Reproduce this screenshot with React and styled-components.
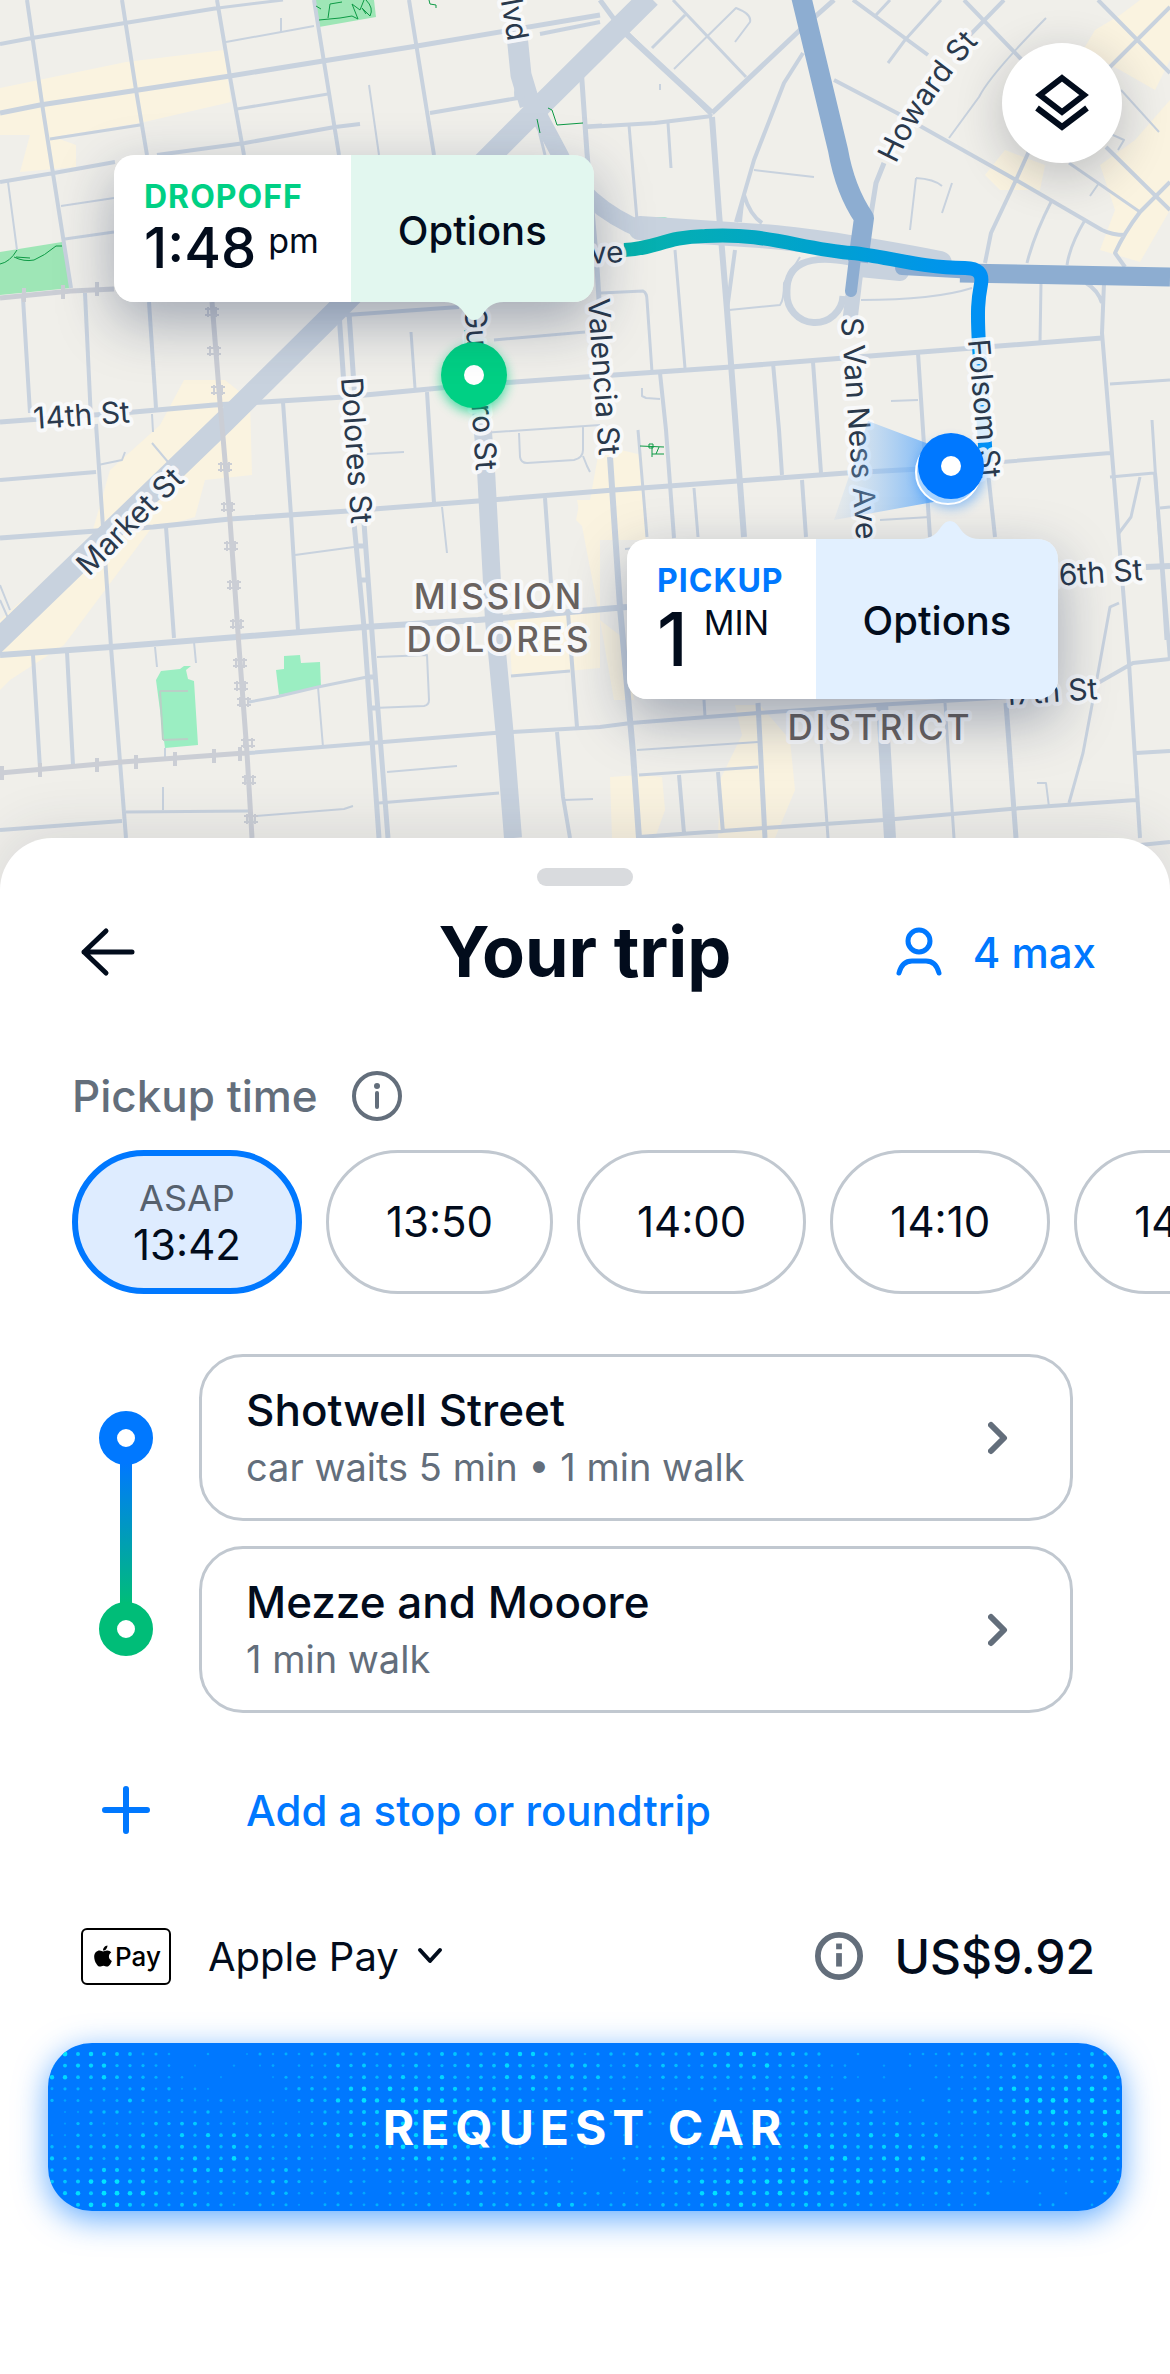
import { useState } from "react";
import styled, { createGlobalStyle, css } from "styled-components";
import { FaApple } from "react-icons/fa";

const INK = "#020c1c";
const BLUE = "#0078ff";
const GREEN = "#00d084";
const GREY = "#636e7b";
const LINE = "#c1c8d0";

const GlobalStyle = createGlobalStyle`
  *, *::before, *::after {
    box-sizing: border-box;
  }
  body {
    margin: 0;
    background: #fff;
    color: ${INK};
    font-family: Inter, "Liberation Sans", sans-serif;
  }
  button, select {
    font: inherit;
    color: inherit;
    border: none;
    background: none;
    padding: 0;
    cursor: pointer;
  }
`;

const Page = styled.main`
  overflow: hidden;
`;

/* ---------- map ---------- */

const MapArea = styled.section`
  position: relative;
`;

const MapCanvas = styled.svg`
  display: block;
  width: 100%;
  background: #f0efea;
`;

const Road = styled.path`
  fill: none;
  stroke: ${({ $color }) => $color || "#c8d2de"};
  stroke-width: ${({ $w }) => $w};
  stroke-linejoin: round;
  stroke-linecap: ${({ $cap }) => $cap || "butt"};
`;

const StreetLabel = styled.text`
  font-size: 30px;
  fill: #2a394c;
  stroke: rgba(250, 251, 253, 0.88);
  stroke-width: 8px;
  stroke-linejoin: round;
  paint-order: stroke;
`;

const AreaLabel = styled(StreetLabel)`
  font-size: 35px;
  font-weight: 500;
  letter-spacing: 3px;
  fill: #69625f;
`;

const LayersButton = styled.button`
  position: absolute;
  top: 43px;
  right: 48px;
  width: 120px;
  height: 120px;
  border-radius: 50%;
  background: #fff;
  box-shadow: 0 12px 48px rgba(20, 30, 50, 0.24);
  display: flex;
  align-items: center;
  justify-content: center;
`;

const Callout = styled.div`
  position: absolute;
  left: ${({ $left }) => $left}px;
  top: ${({ $top }) => $top}px;
  display: flex;
  border-radius: 20px;
  box-shadow: 0 20px 56px rgba(20, 40, 80, 0.36);
`;

const CalloutInfo = styled.div`
  background: #fff;
  border-radius: 20px 0 0 20px;
  padding: 25px 32px 19px 30px;
`;

const CalloutKind = styled.div`
  font-size: 32px;
  line-height: 34px;
  font-weight: 700;
  letter-spacing: 1px;
  color: ${({ $color }) => $color};
`;

const CalloutTime = styled.div`
  display: flex;
  align-items: flex-start;
  gap: ${({ $big }) => ($big ? 16 : 12)}px;
  font-size: ${({ $big }) => ($big ? 74 : 56)}px;
  line-height: ${({ $big }) => ($big ? 82 : 69)}px;
  font-weight: 500;
`;

const CalloutUnit = styled.span`
  font-size: 34px;
  line-height: ${({ $big }) => ($big ? 50 : 54)}px;
  font-weight: 400;
`;

const CalloutOptions = styled.button`
  background: ${({ $color }) => $color};
  border-radius: 0 20px 20px 0;
  padding: 3px 47px 0;
  font-size: 40px;
  font-weight: 500;
`;

const Tail = styled.svg`
  position: absolute;
  right: ${({ $right }) => $right}px;
  ${({ $up }) =>
    $up
      ? css`
          bottom: 100%;
          transform: rotate(180deg);
        `
      : css`
          top: 100%;
        `}
`;

/* ---------- sheet ---------- */

const Sheet = styled.section`
  position: relative;
  margin-top: -52px;
  background: #fff;
  border-radius: 52px 52px 0 0;
  box-shadow: 0 -8px 56px rgba(40, 50, 70, 0.12);
  padding: 30px 0 162px;
`;

const Handle = styled.div`
  width: 96px;
  height: 18px;
  margin: 0 auto;
  border-radius: 9px;
  background: #d9dbde;
`;

const Header = styled.header`
  display: grid;
  grid-template-columns: 1fr auto 1fr;
  align-items: center;
  height: 60px;
  margin-top: 36px;
  padding: 0 74px;
`;

const Title = styled.h1`
  margin: 0;
  font-size: 70px;
  line-height: 60px;
  font-weight: 700;
`;

const BackButton = styled.button`
  display: flex;
  justify-self: start;
`;

const Seats = styled.button`
  display: flex;
  align-items: center;
  justify-self: end;
  gap: 30px;
  color: ${BLUE};
  font-size: 42px;
  font-weight: 500;
`;

const PickupLabel = styled.div`
  display: flex;
  align-items: center;
  gap: 34px;
  height: 50px;
  margin-top: 89px;
  padding: 0 72px;
  color: ${GREY};
  font-size: 44px;
  font-weight: 500;
`;

const InfoButton = styled.button`
  display: flex;
  color: ${GREY};
`;

const Times = styled.div`
  display: flex;
  gap: 24px;
  margin-top: 29px;
  padding-left: 72px;
  overflow-x: auto;
  scrollbar-width: none;
`;

const TimeChip = styled.button`
  flex: 0 0 auto;
  display: flex;
  flex-direction: column;
  align-items: center;
  justify-content: center;
  height: 144px;
  padding: 0 57px;
  border-radius: 72px;
  border: 3px solid ${LINE};
  font-size: 42px;
  line-height: 48px;
  ${({ $active }) =>
    $active &&
    css`
      border: 6px solid ${BLUE};
      background: #deecff;
      padding: 0 55px;
    `}
`;

const ChipHint = styled.span`
  font-size: 36px;
  line-height: 46px;
  color: #56616e;
`;

const Trip = styled.div`
  display: grid;
  grid-template-columns: 54px 1fr;
  gap: 46px;
  margin-top: 60px;
  padding: 0 97px 0 99px;
`;

const Rail = styled.div`
  display: flex;
  flex-direction: column;
  align-items: center;
  padding: 57px 0;
`;

const RailDot = styled.span`
  width: 54px;
  height: 54px;
  border-radius: 50%;
  border: 18px solid ${({ $color }) => $color};
`;

const RailLine = styled.span`
  flex: 1;
  width: 12px;
  margin: -2px 0;
  background: linear-gradient(${BLUE}, #00bd78);
`;

const Stops = styled.div`
  display: flex;
  flex-direction: column;
  gap: 25px;
`;

const Stop = styled.button`
  display: flex;
  align-items: center;
  justify-content: space-between;
  height: 167px;
  padding: 0 62px 0 44px;
  border: 3px solid ${LINE};
  border-radius: 44px;
  text-align: left;
  color: ${GREY};
`;

const StopName = styled.div`
  font-size: 44px;
  line-height: 58px;
  font-weight: 500;
  color: ${INK};
`;

const StopNote = styled.div`
  font-size: 38px;
  line-height: 56px;
`;

const AddStop = styled.button`
  display: grid;
  grid-template-columns: 54px 1fr;
  align-items: center;
  justify-items: center;
  gap: 93px;
  height: 60px;
  margin: 67px 0 0 99px;
  color: ${BLUE};
  font-size: 42px;
  font-weight: 500;
`;

const Payment = styled.div`
  display: flex;
  align-items: center;
  height: 60px;
  margin-top: 86px;
  padding: 0 75px 0 81px;
`;

const PayBadge = styled.span`
  display: flex;
  align-items: center;
  justify-content: center;
  width: 90px;
  height: 57px;
  border: 2px solid #000;
  border-radius: 6px;
  color: #000;
  font-size: 26px;
  font-weight: 500;
`;

const PaySelect = styled.select`
  appearance: none;
  margin-left: 37px;
  margin-right: 18px;
  font-size: 40px;
`;

const Price = styled.div`
  display: flex;
  align-items: center;
  gap: 32px;
  margin-left: auto;
  font-size: 48px;
  font-weight: 500;
`;

const RequestButton = styled.button`
  position: relative;
  display: block;
  width: calc(100% - 96px);
  height: 168px;
  margin: 57px 48px 0;
  border-radius: 44px;
  background: ${BLUE};
  box-shadow: 0 8px 32px rgba(0, 120, 255, 0.62);
  color: #fff;
  font-size: 48px;
  font-weight: 700;
  letter-spacing: 6px;
`;

const Sparkle = styled.svg`
  position: absolute;
  inset: 0;
  width: 100%;
  height: 100%;
  border-radius: 44px;
`;

const RequestText = styled.span`
  position: relative;
`;

// streets as [stroke width, path data]
const STREETS = [
  [
    2,
    "M369 85L379 155 M226 42L314 26 M281 18V32 M61 206L114 198 M8 182L17 250 M98 465L122 460L125 452 M295 555L354 547 M155 647L157 667 M194 642L196 663 M318 687L323 747 M377 657L427 655L429 700Q429 705 424 706L373 708 M387 772L457 766 M256 816L344 809L353 806 M163 787V810 M564 800L593 799 M442 507L447 553 M482 433L600 425 M519 433L520 457Q521 463 527 463L574 460Q583 458 583 450V427 M583 456L587 466L590 472 M367 454L404 452 M152 443L168 462 M152 414L153 432 M674 69L736 8Q752 14 750 22L735 42 M754 170L814 177 M1046 18Q990 75 979 97L949 138 M1121 90L1159 132 M916 178L910 230 M916 178Q934 179 942 186 M952 183L942 213 M861 300Q934 300 972 288 M729 310L780 305Q784 300 784 283L800 257 M891 401L918 400 M880 520L930 517 M637 750L758 742 M1037 783H1046L1049 807 M642 388V396L646 398L660 399 M1102 130L1124 140L1118 150 M1099 183L1090 196 M165 748V758 M0 600L8 618 M0 585L10 610 M660 84V90 M625 549L635 548",
  ],
  [
    3,
    "M218 8L283 0 M237 109L328 94 M50 139L140 125 M65 239L114 232 M249 702L276 697L318 687L367 677 M379 803L499 793 M126 812L249 811 M511 676L570 671 M494 340L585 332 M411 332L415 388 M629 125L637 220 M668 123L671 168 M673 0L746 77 M685 15L652 48 M890 0L876 15 M941 0L905 40L888 63 M1069 163L1140 212 M1052 200Q1034 235 1027 263 M1085 220Q1070 245 1067 265 M1041 283L1040 343 M1110 384L1170 380 M601 293L643 291Q647 293 647 300L652 372 M675 250L685 368 M694 488L698 537 M638 430L647 537 M1110 477L1154 473 M1152 420L1166 640 M1140 477L1131 517L1119 533 M1119 603L1110 607L1098 673L1083 753L1069 803 M821 740L828 838 M945 703L954 838 M704 700L705 717 M639 775L758 767 M625 30L712 116 M536 108L540 135L545 155 M516 98Q514 84 521 84 M585 126L602 125 M1160 508L1170 507",
  ],
  [
    4,
    "M27 0L43 110L71 288 M122 0L136 90L147 155 M217 0L230 77L244 155 M314 0L339 155 M409 0L434 155 M0 44L32 38L218 8 M0 182L54 173L115 162 M157 155L245 143L335 127 M360 124L335 127 M23 298L30 413 M85 293L91 420 M96 424L103 527L111 647L126 838 M149 302L156 408 M346 315L459 307 M427 392L434 503 M283 402L291 515L298 630 M0 480L96 472 M166 527L174 638 M33 655L40 768 M67 652L73 765 M249 753L371 743L494 733L600 727L631 723L758 713L876 705L1010 697 M1098 683L1133 663L1170 659 M0 830L122 821 M568 613L577 727 M545 498L551 583 M557 732L563 797L570 838 M712 116L655 123L587 127 M803 53L784 83L754 160L736 222 M853 0L928 55 M834 80L897 113L1016 180L1102 230Q1112 235 1125 235 M964 0L1022 60 M1098 0L1170 73 M1004 0L968 37 M1170 7L1110 67 M1034 140L1016 180L991 233L985 263 M1170 182L1140 212Q1124 233 1115 253L1125 267 M1106 147L1170 210 M1104 283L1102 333L1110 430L1129 663L1140 838 M735 250L727 310 M660 373L666 430L674 538 M773 363L779 430L782 475 M813 362L821 473 M918 353L930 537 M987 463L995 537 M802 480L806 537 M639 837L765 828L884 820L1010 809L1136 800 M679 775L684 833 M718 772L723 833 M1136 753L1170 751 M1002 462L1110 453 M430 113L518 98 M600 22L540 34 M740 222Q742 200 744 195Q750 215 762 223 M1086 283Q1098 290 1102 303 M1140 845L1170 842 M1155 473L1170 660",
  ],
  [
    5,
    "M0 113L40 105L230 76L323 61L417 46L600 15 M0 422L134 412L214 405L264 402L344 397L440 388L501 383L570 378L658 372L731 367L857 357L1102 338 M339 313L345 400 M349 313L355 400 M354 523L364 627L379 838 M364 523L374 660L388 838 M354 546H364 M358 580H367 M368 677H375 M371 708H378 M0 538L96 531L153 527L230 519L348 511L478 501L614 490L738 481L846 473L920 469 M712 113L800 30L834 0 M884 163L876 183L868 233 M758 703L765 838 M1006 703L1016 838 M581 67L587 153L597 267L599 300 M600 0L622 30",
  ],
  [
    6,
    "M0 655L111 647L237 637L364 627L478 620L627 607 M1146 567L1170 566 M712 117L719 213L727 310L736 430L744 537 M610 457L620 607L633 753L639 838 M622 30L712 113",
  ],
];

const RAILWAY =
  "M0 298L71 291L114 289 M212 302L220 403L223 437L230 520L239 647L247 753L252 838 M0 773L122 762L245 753";

// cross ties of the railway, as [x, y, vertical line]
const TIES = [
  [212, 312, true],
  [214, 351, true],
  [218, 390, true],
  [225, 467, true],
  [228, 507, true],
  [231, 546, true],
  [234, 585, true],
  [237, 624, true],
  [240, 663, true],
  [241, 686, true],
  [244, 702, true],
  [248, 743, true],
  [249, 780, true],
  [251, 819, true],
  [24, 295],
  [63, 292],
  [97, 289],
  [2, 773],
  [40, 770],
  [97, 765],
  [136, 762],
  [175, 759],
  [214, 756],
  [240, 754],
];

const WARM = [
  "0,88 126,62 224,50 231,102 140,123 54,137 76,145 76,167 20,172 30,135 0,135",
  "184,380 225,380 250,400 252,475 205,480 195,517 150,530 64,645 10,680 0,690 0,620 90,540 110,470 160,425",
  "1083,50 1095,30 1120,15 1140,0 1170,0 1170,60 1155,90 1120,70",
  "985,175 1005,150 1045,165 1040,190 1000,190",
  "1100,165 1135,140 1170,100 1170,210 1140,262 1100,250 1115,210",
  "600,445 642,455 646,540 596,540 576,520 580,500 590,500",
  "577,500 600,500 600,620 614,700 634,700 626,640 600,620",
  "508,618 600,612 600,668 512,676",
  "610,777 640,775 662,777 665,810 655,838 612,838",
  "735,705 760,705 790,740 795,790 775,838 718,838 720,780 742,735",
];

const MapView = () => (
  <MapCanvas viewBox="0 0 1170 890" role="img" aria-label="Trip map">
    <defs>
      <linearGradient id="route" gradientUnits="userSpaceOnUse" x1="627" y1="0" x2="985" y2="0">
        <stop offset="0" stopColor="#06b2ac" />
        <stop offset="0.5" stopColor="#00a3cc" />
        <stop offset="1" stopColor="#0090f5" />
      </linearGradient>
      <linearGradient id="beam" x1="1" y1="0" x2="0" y2="0">
        <stop offset="0" stopColor="#4aa0fb" stopOpacity="0.9" />
        <stop offset="1" stopColor="#9cc8f8" stopOpacity="0.1" />
      </linearGradient>
      <filter id="glow" x="-50%" y="-50%" width="200%" height="200%">
        <feGaussianBlur stdDeviation="6" />
      </filter>
      <path id="howard" d="M896 164Q925 100 988 32" />
    </defs>

    {WARM.map((points) => (
      <polygon key={points} points={points} fill="#faf3e0" />
    ))}
    <g fill="#9ee6b6">
      <polygon points="314,0 374,0 376,17 319,27" />
      <polygon points="0,252 62,242 71,288 0,295" />
    </g>
    <g fill="#9beec2">
      <polygon points="156,680 161,671 180,669 184,666 191,666 186,670 188,679 194,681 198,745 165,748" />
      <polygon points="276,670 284,669 284,656 300,655 301,663 320,662 321,687 279,695" />
      <polygon points="646,217 665,217 680,223 711,223 700,230 665,230" />
      <polygon points="640,232 652,238 642,240" />
    </g>
    <Road $w={2} $color="#b9cfc6" d="M160 691H188M160 691L163 740M163 740L188 739" />

    {STREETS.map(([width, d]) => (
      <Road key={width} $w={width} d={d} />
    ))}
    <Road $w={12} d="M882 703L890 838" />
    <Road $w={18} d="M474 320L486 470L494 620L505 737L513 838" />
    <Road $w={22} d="M-10 648L226 420L337 310L536 110L650 -3" />
    <Road $w={21} d="M517 35L521 75L530 105" />
    <Road $w={17} d="M528 95L560 155Q580 205 646 232" />
    <Road $w={24} $cap="round" d="M640 228Q700 232 760 236T940 263" />
    <Road $w={18} $cap="round" d="M860 268L900 272" />
    <Road $w={7} d="M850 262Q785 250 787 293A28 28 0 0 0 843 296" />
    <Road $w={15} d="M856 270L850 320" />

    <Road $w={5} $color="#cbced5" d={RAILWAY} />
    {TIES.map(([x, y, upright]) => (
      <Road
        key={`${x}-${y}`}
        $w={2}
        $color="#cbced5"
        d={
          upright
            ? `M${x - 7} ${y - 3}h14M${x - 7} ${y + 3}h14M${x - 4} ${y - 5}v10M${x + 4} ${y - 5}v10`
            : `M${x - 1} ${y - 7}v14M${x + 1} ${y - 7}v14`
        }
      />
    ))}

    <Road
      $w={1}
      $color="#0d9a45"
      d="M319 20L340 18L352 16L358 19L352 4L360 10L364 0 M330 4L328 18 M330 4L342 2 M366 0Q374 8 370 16L362 8L366 14M429 0L430 4L436 5V8 M316 6L321 9 M0 264Q10 262 17 250 M14 257Q24 262 34 260Q44 256 56 246H62 M16 257L30 258 M548 108L552 110L557 125L583 123 M537 119L540 133 M640 446L664 447M652 446V457M652 454H664 M659 447L656 454 M649 444h4v4h-4z M465 330v14"
    />

    <Road $w={20} $color="#8dadd1" d="M801 -4L838 150Q845 190 864 218L858 262" />
    <Road $w={12} $color="#8dadd1" $cap="round" d="M856 250L851 291" />
    <Road $w={14} $color="#8dadd1" $cap="round" d="M902 268L975 272" />
    <Road $w={19} $color="#8dadd1" d="M960 273L1170 277" />
    <Road
      $w={14}
      $color="url(#route)"
      d="M624 250C655 249 665 237 705 236C765 232 800 249 852 253C885 256 920 268 965 268Q984 268 981 284C978 300 977 310 979 345L986 462"
    />

    <StreetLabel textAnchor="end" transform="translate(508 42) rotate(80)">
      Blvd
    </StreetLabel>
    <StreetLabel textAnchor="end" transform="translate(624 262) rotate(-3)">
      Duboce Ave
    </StreetLabel>
    <StreetLabel>
      <textPath href="#howard">Howard St</textPath>
    </StreetLabel>
    <StreetLabel transform="translate(341 378) rotate(86)">Dolores St</StreetLabel>
    <StreetLabel textAnchor="end" transform="translate(476 471) rotate(86)">
      Guerrero St
    </StreetLabel>
    <StreetLabel transform="translate(588 299) rotate(86)">Valencia St</StreetLabel>
    <StreetLabel transform="translate(841 318) rotate(86)">S Van Ness Ave</StreetLabel>
    <StreetLabel transform="translate(968 340) rotate(85)">Folsom St</StreetLabel>
    <StreetLabel transform="translate(34 429) rotate(-4)">14th St</StreetLabel>
    <StreetLabel transform="translate(89 577) rotate(-45)">Market St</StreetLabel>
    <StreetLabel textAnchor="end" transform="translate(1143 580) rotate(-4)">
      16th St
    </StreetLabel>
    <StreetLabel textAnchor="end" transform="translate(1098 699) rotate(-4)">
      17th St
    </StreetLabel>
    <AreaLabel textAnchor="middle" x="499" y="609">
      MISSION
    </AreaLabel>
    <AreaLabel textAnchor="middle" x="499" y="652">
      DOLORES
    </AreaLabel>
    <AreaLabel textAnchor="middle" x="880" y="740">
      DISTRICT
    </AreaLabel>

    <polygon points="868,421 950,452 950,499 834,520" fill="url(#beam)" />
    <circle cx="951" cy="474" r="34" fill={BLUE} opacity="0.4" filter="url(#glow)" />
    <circle cx="948" cy="472" r="32" fill="#a9d4ff" stroke="#fff" strokeWidth="2" />
    <circle cx="951" cy="466" r="33" fill={BLUE} />
    <circle cx="951" cy="466" r="10" fill="#fff" />

    <circle cx="474" cy="379" r="33" fill={GREEN} opacity="0.7" filter="url(#glow)" />
    <circle cx="474" cy="375" r="33" fill={GREEN} />
    <circle cx="474" cy="375" r="10" fill="#fff" />
  </MapCanvas>
);

const CalloutTail = ({ color, right, up }) => (
  <Tail $right={right} $up={up} width="60" height="18" viewBox="0 0 60 18" aria-hidden="true">
    <path d="M0 0C12 0 17 6 21 12Q25 18 30 18T39 12C43 6 48 0 60 0Z" fill={color} />
  </Tail>
);

const InfoIcon = ({ size, bold }) => (
  <svg width={size} height={size} viewBox="0 0 50 50" fill="none" stroke="currentColor">
    <circle cx="25" cy="25" r={bold ? 22 : 23} strokeWidth={bold ? 6 : 4} />
    <path d="M25 22V36" strokeWidth={bold ? 6 : 4} strokeLinecap={bold ? "butt" : "round"} />
    {bold ? (
      <path d="M22 12h6v6h-6z" fill="currentColor" stroke="none" />
    ) : (
      <circle cx="25" cy="15" r="3" fill="currentColor" stroke="none" />
    )}
  </svg>
);

const ChevronRight = () => (
  <svg width="20" height="34" viewBox="0 0 20 34" fill="none" stroke="currentColor">
    <path d="M3 4L16 17L3 30" strokeWidth="6" strokeLinecap="round" strokeLinejoin="round" />
  </svg>
);

// dot grid whose dots swell and fade in soft clouds
const DOTS = [];
for (let row = 0; row < 14; row++) {
  for (let col = 0; col < 83; col++) {
    const noise = Math.abs(Math.sin(col * 12.9898 + row * 78.233) * 43758.5453) % 1;
    const cloud =
      Math.sin(col * 0.24 - row * 0.08 + 1.3) * 0.8 +
      Math.sin(col * 0.13 + row * 0.42 + 2.2) +
      Math.sin(col * 0.37 - row * 0.5 + 0.8) * 0.7;
    const level = Math.max(0, Math.min(1, 0.46 + cloud * 0.22 + (noise - 0.5) * 0.5));
    if (level > 0.06) DOTS.push({ x: 4 + col * 13, y: 11 + row * 11.6, level });
  }
}

const TIMES = ["13:42", "13:50", "14:00", "14:10", "14:20"];

const STOPS = [
  { name: "Shotwell Street", note: "car waits 5 min • 1 min walk" },
  { name: "Mezze and Mooore", note: "1 min walk" },
];

const App = () => {
  const [time, setTime] = useState(TIMES[0]);

  return (
    <Page>
      <GlobalStyle />
      <MapArea>
        <MapView />
        <Callout $left={114} $top={155}>
          <CalloutInfo>
            <CalloutKind $color={GREEN}>DROPOFF</CalloutKind>
            <CalloutTime>
              1:48 <CalloutUnit>pm</CalloutUnit>
            </CalloutTime>
          </CalloutInfo>
          <CalloutOptions $color="#e2f7ef">Options</CalloutOptions>
          <CalloutTail color="#e2f7ef" right={90} />
        </Callout>
        <Callout $left={627} $top={539}>
          <CalloutInfo>
            <CalloutKind $color={BLUE}>PICKUP</CalloutKind>
            <CalloutTime $big>
              1 <CalloutUnit $big>MIN</CalloutUnit>
            </CalloutTime>
          </CalloutInfo>
          <CalloutOptions $color="#e2f0ff">Options</CalloutOptions>
          <CalloutTail color="#e2f0ff" right={78} up />
        </Callout>
        <LayersButton aria-label="Map layers">
          <svg width="56" height="60" viewBox="0 0 56 60" fill="none" stroke={INK} strokeWidth="6">
            <path d="M28 5L50 22L28 39L6 22Z" />
            <path d="M3 35L28 54L53 35" />
          </svg>
        </LayersButton>
      </MapArea>

      <Sheet>
        <Handle />
        <Header>
          <BackButton aria-label="Back">
            <svg width="64" height="54" viewBox="0 0 64 54" fill="none" stroke={INK}>
              <path
                d="M32 6L10 27L32 48M10 27H58"
                strokeWidth="5"
                strokeLinecap="round"
                strokeLinejoin="round"
              />
            </svg>
          </BackButton>
          <Title>Your trip</Title>
          <Seats>
            <svg width="48" height="50" viewBox="0 0 48 50" fill="none" stroke={BLUE} strokeWidth="5">
              <circle cx="24" cy="14" r="11" />
              <path d="M4 46Q7 34 17 34H31Q41 34 44 46" strokeLinecap="round" />
            </svg>
            4 max
          </Seats>
        </Header>

        <PickupLabel>
          Pickup time
          <InfoButton aria-label="About pickup time">
            <InfoIcon size={50} />
          </InfoButton>
        </PickupLabel>
        <Times>
          {TIMES.map((t, i) => (
            <TimeChip key={t} $active={t === time} aria-pressed={t === time} onClick={() => setTime(t)}>
              {i === 0 && <ChipHint>ASAP</ChipHint>}
              {t}
            </TimeChip>
          ))}
        </Times>

        <Trip>
          <Rail>
            <RailDot $color={BLUE} />
            <RailLine />
            <RailDot $color="#00bd78" />
          </Rail>
          <Stops>
            {STOPS.map(({ name, note }) => (
              <Stop key={name}>
                <div>
                  <StopName>{name}</StopName>
                  <StopNote>{note}</StopNote>
                </div>
                <ChevronRight />
              </Stop>
            ))}
          </Stops>
        </Trip>
        <AddStop>
          <svg width="48" height="48" viewBox="0 0 48 48" stroke={BLUE}>
            <path d="M24 3V45M3 24H45" strokeWidth="6" strokeLinecap="round" />
          </svg>
          Add a stop or roundtrip
        </AddStop>

        <Payment>
          <PayBadge>
            <FaApple size={24} />
            Pay
          </PayBadge>
          <PaySelect aria-label="Payment method" defaultValue="apple">
            <option value="apple">Apple Pay</option>
          </PaySelect>
          <svg width="26" height="18" viewBox="0 0 26 18" fill="none" stroke={INK}>
            <path d="M3 3L13 14L23 3" strokeWidth="4" strokeLinecap="round" strokeLinejoin="round" />
          </svg>
          <Price>
            <InfoButton aria-label="Fare details">
              <InfoIcon size={48} bold />
            </InfoButton>
            US$9.92
          </Price>
        </Payment>
        <RequestButton>
          <Sparkle viewBox="0 0 1074 168" preserveAspectRatio="xMidYMid slice" aria-hidden="true">
            {DOTS.map(({ x, y, level }) => (
              <circle
                key={`${x}-${y}`}
                cx={x}
                cy={y}
                r={1 + level * 1.4}
                fill="#00e5ff"
                opacity={0.25 + level * 0.75}
              />
            ))}
          </Sparkle>
          <RequestText>REQUEST CAR</RequestText>
        </RequestButton>
      </Sheet>
    </Page>
  );
};

export default App;
